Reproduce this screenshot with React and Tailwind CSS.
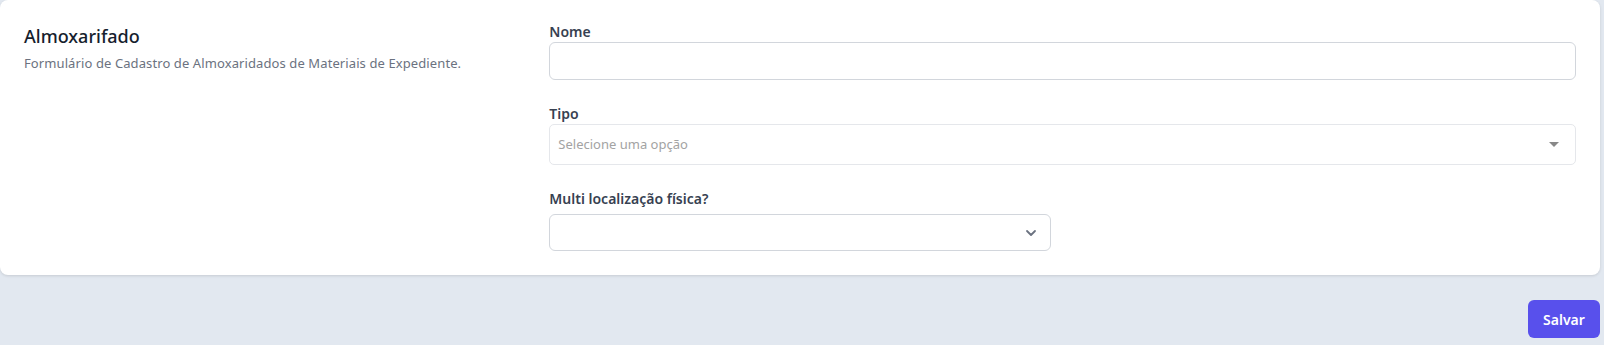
import React from 'react';

const font = { fontFamily: '"Noto Sans", "Segoe UI", sans-serif' };

export default function App() {
  return (
    <div className="min-h-screen bg-[#e2e8f0] pr-1 text-[14px]" style={font}>
      {/* Form card */}
      <div className="bg-white rounded-lg shadow-[0_1px_3px_rgba(0,0,0,0.12)] px-6 pt-[22px] pb-6">
        <div className="grid grid-cols-3 gap-6">
          <div>
            <h3 className="text-[18px] leading-6 font-medium text-[#161e2e] mt-[2px]">Almoxarifado</h3>
            <p className="mt-[5px] text-[13px] leading-5 tracking-[0.1px] text-[#6b7280]">
              Formulário de Cadastro de Almoxaridados de Materiais de Expediente.
            </p>
          </div>

          <div className="col-span-2 flex flex-col gap-6">
            <div>
              <label className="block text-[14px] leading-5 font-semibold text-[#374151]">Nome</label>
              <input
                type="text"
                className="block w-full h-[38px] border border-[#d2d6dc] rounded-md px-3 outline-none"
              />
            </div>

            <div>
              <label className="block text-[14px] leading-5 font-semibold text-[#374151]">Tipo</label>
              <div className="relative h-[41px] border border-[#e5e7eb] rounded-[5px] bg-white flex items-center pl-2 pr-4">
                <span className="text-[13px] text-[#a3a3a3] flex-1">Selecione uma opção</span>
                <span className="w-0 h-0 border-l-[5px] border-r-[5px] border-t-[5px] border-l-transparent border-r-transparent border-t-[#888]"></span>
              </div>
            </div>

            <div className="grid grid-cols-2 gap-6">
              <div>
                <label className="block text-[14px] leading-5 font-semibold text-[#374151]">Multi localização física?</label>
                <div className="mt-[5px] h-[37px] border border-[#d2d6dc] rounded-md bg-white flex items-center justify-end pr-[9px]">
                  <svg width="20" height="20" viewBox="0 0 20 20" fill="none">
                    <path d="M6 8l4 4 4-4" stroke="#6b7280" strokeWidth="1.8" strokeLinecap="round" strokeLinejoin="round" />
                  </svg>
                </div>
              </div>
            </div>
          </div>
        </div>
      </div>

      {/* Actions */}
      <div className="flex justify-end pt-[25px]">
        <button className="h-[38px] w-[72px] rounded-md bg-[#5850ec] text-white text-[14px] font-semibold">
          Salvar
        </button>
      </div>
    </div>
  );
}
